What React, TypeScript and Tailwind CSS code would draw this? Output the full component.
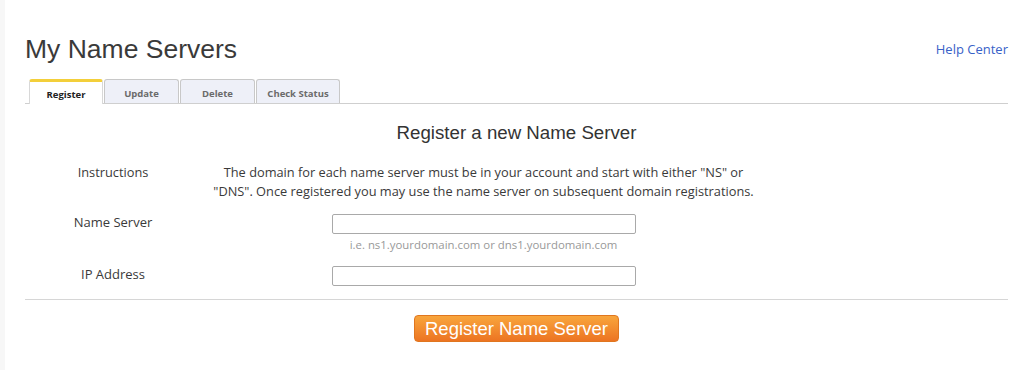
import React from 'react';

const tabs = ['Register', 'Update', 'Delete', 'Check Status'];

const App = () => {
  return (
    <div className="flex min-h-[370px] bg-white text-[#333]" style={{ fontFamily: '"Open Sans", sans-serif' }}>
      <div className="w-[5px] shrink-0 bg-[#f7f7f7]" />
      <div className="flex-1 pl-[20px] pr-[16px]">
        <div className="flex items-center justify-between pt-[33px]">
          <h1 className="text-[26.5px] leading-[32px] text-[#3a3a3a]" style={{ fontFamily: '"Liberation Sans", Arial, sans-serif' }}>
            My Name Servers
          </h1>
          <a href="#" className="text-[13px] leading-[18px] text-[#3862c8]">Help Center</a>
        </div>

        {/* tabs */}
        <div className="mt-[14px] flex border-b border-[#cfcfcf] pl-[4px]">
          {tabs.map((t, i) =>
            i === 0 ? (
              <div
                key={t}
                className="-mb-px flex h-[25px] w-[74px] justify-center rounded-t-[3px] border-x border-t-[3px] border-x-[#d8d8d8] border-t-[#f3cf3a] bg-white pt-[6px] text-[9.5px] leading-[14px] font-bold text-[#222]"
              >
                {t}
              </div>
            ) : (
              <div
                key={t}
                className={`ml-px flex h-[24px] justify-center rounded-t-[3px] border border-b-0 border-[#c8c8c8] bg-[#eef0f8] pt-[7px] text-[9.5px] leading-[14px] font-bold text-[#6b6b6b] ${
                  i === 3 ? 'w-[84px]' : 'w-[75px]'
                }`}
              >
                {t}
              </div>
            )
          )}
        </div>

        <h2
          className="mt-[17px] text-center text-[18.7px] leading-[24px] text-[#333]"
          style={{ fontFamily: '"Liberation Sans", Arial, sans-serif' }}
        >
          Register a new Name Server
        </h2>

        <div className="mt-[18px] grid grid-cols-[176px_565px] text-[12.8px] text-[#3a3a3a]">
          <div className="text-center leading-[19px]">Instructions</div>
          <div className="text-center leading-[19px]">
            The domain for each name server must be in your account and start with either "NS" or
            <br />
            "DNS". Once registered you may use the name server on subsequent domain registrations.
          </div>
        </div>

        <div className="mt-[13px] grid grid-cols-[176px_565px] text-[13px] text-[#3a3a3a]">
          <div className="text-center leading-[17px]">Name Server</div>
          <div className="flex flex-col items-center">
            <input className="h-[20px] w-[304px] rounded-[2px] border border-[#a9a9a9] bg-white px-1 text-[12px] outline-none" />
            <div className="mt-[3px] text-[11.4px] leading-[16px] text-[#999]">
              i.e. ns1.yourdomain.com or dns1.yourdomain.com
            </div>
          </div>
        </div>

        <div className="mt-[13px] grid grid-cols-[176px_565px] text-[13px] text-[#3a3a3a]">
          <div className="text-center leading-[17px]">IP Address</div>
          <div className="flex justify-center">
            <input className="h-[20px] w-[304px] rounded-[2px] border border-[#a9a9a9] bg-white px-1 text-[12px] outline-none" />
          </div>
        </div>

        <div className="mt-[13px] border-t border-[#d6d6d6]" />

        <div className="mt-[15px] flex justify-center">
          <button
            className="h-[27px] w-[205px] rounded-[4px] border border-[#e0761f] bg-gradient-to-b from-[#f8a53c] to-[#ec7422] text-[18.5px] leading-[25px] text-white"
            style={{ fontFamily: '"Liberation Sans", Arial, sans-serif' }}
          >
            Register Name Server
          </button>
        </div>
      </div>
    </div>
  );
};

export default App;
